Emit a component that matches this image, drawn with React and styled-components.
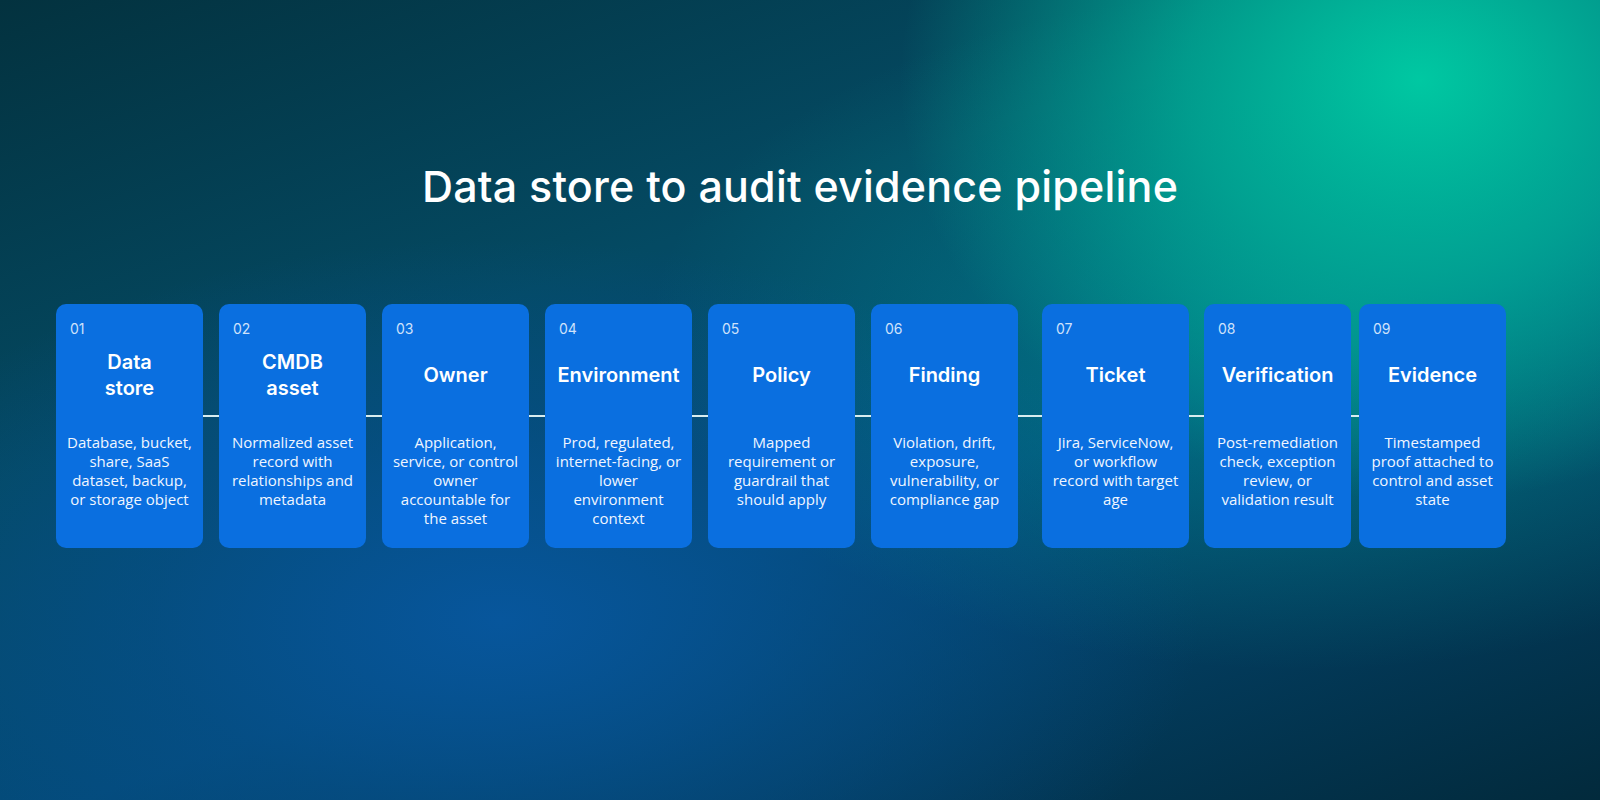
import styled, { createGlobalStyle } from "styled-components";

const Global = createGlobalStyle`
  html, body { margin: 0; padding: 0; }
  body { font-family: Inter, "Noto Sans", sans-serif; }
`;

const STEPS = [
  ["01", "Data store", "Database, bucket, share, SaaS dataset, backup, or storage object", 0],
  ["02", "CMDB asset", "Normalized asset record with relationships and metadata", 16],
  ["03", "Owner", "Application, service, or control owner accountable for the asset", 16],
  ["04", "Environment", "Prod, regulated, internet-facing, or lower environment context", 16],
  ["05", "Policy", "Mapped requirement or guardrail that should apply", 16],
  ["06", "Finding", "Violation, drift, exposure, vulnerability, or compliance gap", 16],
  ["07", "Ticket", "Jira, ServiceNow, or workflow record with target age", 24],
  ["08", "Verification", "Post-remediation check, exception review, or validation result", 15],
  ["09", "Evidence", "Timestamped proof attached to control and asset state", 8],
];

const Page = styled.div`
  width: 1600px;
  height: 800px;
  overflow: hidden;
  background:
    radial-gradient(ellipse 520px 420px at 1420px 80px, #00c8a2 0%, rgba(0,185,155,0.7) 45%, rgba(0,120,130,0) 100%),
    radial-gradient(ellipse 650px 340px at 1300px 330px, rgba(0,170,150,0.5) 0%, rgba(0,120,130,0) 100%),
    radial-gradient(ellipse 700px 380px at 500px 620px, #07569c 0%, rgba(6,80,140,0.6) 50%, rgba(4,50,90,0) 100%),
    linear-gradient(160deg, #03323f 0%, #044a63 35%, #034a78 60%, #022a3c 100%);
  display: flex;
  flex-direction: column;
  color: #fff;
`;

const Title = styled.h1`
  margin: 160px 0 0;
  text-align: center;
  font-size: 43px;
  font-weight: 500;
  letter-spacing: 0.2px;
`;

const Row = styled.div`
  display: flex;
  margin-top: 92px;
  padding-left: 56px;
`;

const Link = styled.div`
  width: ${(p) => p.$w}px;
  height: 2px;
  align-self: center;
  margin-top: -20px;
  background: #d8ecef;
`;

const Card = styled.div`
  width: 147px;
  height: 244px;
  flex-shrink: 0;
  border-radius: 10px;
  background: #0a6fe0;
  box-sizing: border-box;
  padding: 16px 4px 0;
  display: flex;
  flex-direction: column;
`;

const Num = styled.div`
  font-size: 14px;
  color: #cfe2fb;
  padding-left: 10px;
`;

const Head = styled.div`
  height: 76px;
  display: flex;
  align-items: center;
  justify-content: center;
  text-align: center;
  font-size: 20px;
  font-weight: 600;
  line-height: 26px;
  padding: 0 22px;
`;

const Body = styled.div`
  margin-top: 20px;
  padding: 0 6px;
  text-align: center;
  font-family: "Open Sans", "Noto Sans", sans-serif;
  font-size: 15px;
  line-height: 19px;
  color: #f0f6ff;
`;

export default function App() {
  return (
    <Page>
      <Global />
      <Title>Data store to audit evidence pipeline</Title>
      <Row>
        {STEPS.map(([n, t, d, g]) => (
          <>
            {g > 0 && <Link $w={g} key={n + "l"} />}
            <Card key={n}>
              <Num>{n}</Num>
              <Head>{t}</Head>
              <Body>{d}</Body>
            </Card>
          </>
        ))}
      </Row>
    </Page>
  );
}
